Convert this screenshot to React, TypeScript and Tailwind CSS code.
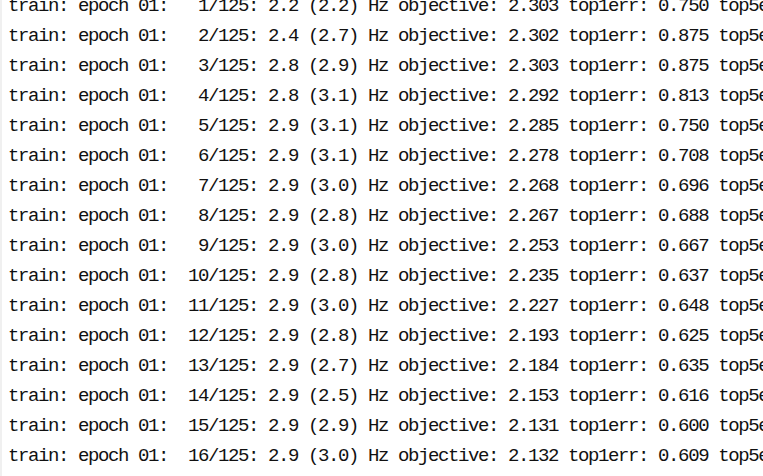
const rows = [
  { n: 1, hz: '2.2', avg: '2.2', obj: '2.303', err: '0.750', e5: '0.500' },
  { n: 2, hz: '2.4', avg: '2.7', obj: '2.302', err: '0.875', e5: '0.500' },
  { n: 3, hz: '2.8', avg: '2.9', obj: '2.303', err: '0.875', e5: '0.500' },
  { n: 4, hz: '2.8', avg: '3.1', obj: '2.292', err: '0.813', e5: '0.406' },
  { n: 5, hz: '2.9', avg: '3.1', obj: '2.285', err: '0.750', e5: '0.350' },
  { n: 6, hz: '2.9', avg: '3.1', obj: '2.278', err: '0.708', e5: '0.313' },
  { n: 7, hz: '2.9', avg: '3.0', obj: '2.268', err: '0.696', e5: '0.286' },
  { n: 8, hz: '2.9', avg: '2.8', obj: '2.267', err: '0.688', e5: '0.281' },
  { n: 9, hz: '2.9', avg: '3.0', obj: '2.253', err: '0.667', e5: '0.264' },
  { n: 10, hz: '2.9', avg: '2.8', obj: '2.235', err: '0.637', e5: '0.250' },
  { n: 11, hz: '2.9', avg: '3.0', obj: '2.227', err: '0.648', e5: '0.244' },
  { n: 12, hz: '2.9', avg: '2.8', obj: '2.193', err: '0.625', e5: '0.229' },
  { n: 13, hz: '2.9', avg: '2.7', obj: '2.184', err: '0.635', e5: '0.226' },
  { n: 14, hz: '2.9', avg: '2.5', obj: '2.153', err: '0.616', e5: '0.214' },
  { n: 15, hz: '2.9', avg: '2.9', obj: '2.131', err: '0.600', e5: '0.204' },
  { n: 16, hz: '2.9', avg: '3.0', obj: '2.132', err: '0.609', e5: '0.201' },
  { n: 17, hz: '2.9', avg: '3.1', obj: '2.118', err: '0.598', e5: '0.195' },
];

const line = (r: (typeof rows)[number]) =>
  `train: epoch 01: ${String(r.n).padStart(3)}/125: ${r.hz} (${r.avg}) Hz objective: ${r.obj} top1err: ${r.err} top5err: ${r.e5}`;

export default function App() {
  return (
    <div className="h-[476px] w-[763px] overflow-hidden bg-white border-l-2 border-[#f0f0f0]">
      <div className="-mt-[9px] pl-[6px] font-['Liberation_Mono',monospace] text-[19px] tracking-[-1.4px] leading-[30px] text-[#111]">
        {rows.map((r) => (
          <div key={r.n} className="whitespace-pre">
            {line(r)}
          </div>
        ))}
      </div>
    </div>
  );
}
